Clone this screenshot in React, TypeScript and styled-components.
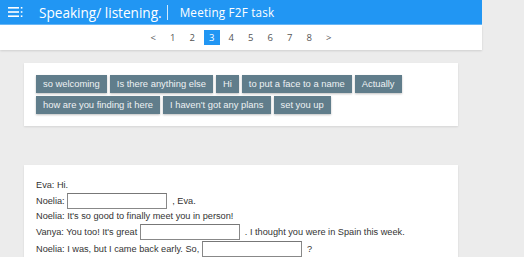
import React from 'react'
import styled, { createGlobalStyle } from 'styled-components'

const GlobalStyle = createGlobalStyle`
  html, body {
    margin: 0;
    padding: 0;
    background: #ececec;
    font-family: 'Liberation Sans', Arial, sans-serif;
  }
`

const Page = styled.div`
  width: 482px;
`

const TopBar = styled.header`
  display: flex;
  align-items: center;
  height: 24px;
  background: #2196f3;
  border-bottom: 1px solid #6ab8f7;
  color: #fff;
  padding-left: 8px;
`

const MenuIcon = styled.svg`
  width: 15px;
  height: 10px;
  margin-right: 16px;
`

const Title = styled.h1`
  margin: 0;
  font-family: 'Open Sans', sans-serif;
  font-weight: 400;
  font-size: 13.6px;
`

const Divider = styled.span`
  width: 1px;
  height: 15px;
  background: rgba(255, 255, 255, 0.8);
  margin: 0 12px 0 5px;
`

const Subtitle = styled.span`
  font-family: 'Open Sans', sans-serif;
  font-size: 11.7px;
  letter-spacing: 0.2px;
`

const Pager = styled.nav`
  display: flex;
  justify-content: center;
  align-items: center;
  gap: 4px;
  height: 25px;
  background: #fff;
  box-shadow: 0 1px 2px rgba(0, 0, 0, 0.12);
`

const PageItem = styled.span<{ $active?: boolean }>`
  width: 15.5px;
  height: 15px;
  display: flex;
  align-items: center;
  justify-content: center;
  font-family: 'Open Sans', sans-serif;
  font-size: 9.5px;
  color: ${({ $active }) => ($active ? '#fff' : '#555')};
  background: ${({ $active }) => ($active ? '#2196f3' : 'transparent')};
`

const Card = styled.section`
  width: 434px;
  margin: 0 auto;
  background: #fff;
  box-shadow: 0 1px 2px rgba(0, 0, 0, 0.1);
  box-sizing: border-box;
`

const WordBank = styled(Card)`
  margin-top: 13px;
  padding: 12px 12px 9px;
  display: flex;
  flex-wrap: wrap;
`

const Chip = styled.span`
  height: 18px;
  line-height: 18px;
  padding: 0 7px;
  margin: 0 3px 3px 0;
  background: #607d8b;
  color: #eef2f4;
  font-size: 9.4px;
  box-shadow: 0 1px 2px rgba(0, 0, 0, 0.25);
`

const Dialogue = styled(Card)`
  margin-top: 39px;
  padding: 13px 12px;
  font-size: 9.2px;
  color: #333;
`

const Line = styled.div<{ $tall?: boolean }>`
  display: flex;
  align-items: center;
  height: ${({ $tall }) => ($tall ? '17px' : '14px')};
  white-space: pre;
`

const Blank = styled.span`
  display: inline-block;
  width: 100px;
  height: 16px;
  box-sizing: border-box;
  border: 1px solid #888;
  border-top-color: #777;
`

const Indent = styled.span`
  width: 206px;
`

const words = [
  'so welcoming',
  'Is there anything else',
  'Hi',
  'to put a face to a name',
  'Actually',
  "how are you finding it here",
  "I haven't got any plans",
  'set you up',
]

const App: React.FC = () => {
  return (
    <>
      <GlobalStyle />
      <Page>
        <TopBar>
          <MenuIcon viewBox="0 0 15 10">
            <rect x="0" y="0" width="11" height="1.6" fill="#fff" />
            <rect x="0" y="4.2" width="11" height="1.6" fill="#fff" />
            <rect x="0" y="8.4" width="11" height="1.6" fill="#fff" />
            <rect x="12.8" y="0" width="1.6" height="1.6" fill="#fff" />
            <rect x="12.8" y="4.2" width="1.6" height="1.6" fill="#fff" />
            <rect x="12.8" y="8.4" width="1.6" height="1.6" fill="#fff" />
          </MenuIcon>
          <Title>Speaking/ listening.</Title>
          <Divider />
          <Subtitle>Meeting F2F task</Subtitle>
        </TopBar>
        <Pager>
          <PageItem>&lt;</PageItem>
          {[1, 2, 3, 4, 5, 6, 7, 8].map((n) => (
            <PageItem key={n} $active={n === 3}>
              {n}
            </PageItem>
          ))}
          <PageItem>&gt;</PageItem>
        </Pager>
        <WordBank>
          {words.map((w) => (
            <Chip key={w}>{w}</Chip>
          ))}
        </WordBank>
        <Dialogue>
          <Line>Eva: Hi.</Line>
          <Line $tall>
            Noelia: <Blank />  , Eva.
          </Line>
          <Line>Noelia: It's so good to finally meet you in person!</Line>
          <Line $tall>
            Vanya: You too! It's great <Blank />  . I thought you were in Spain this week.
          </Line>
          <Line $tall>
            Noelia: I was, but I came back early. So, <Blank />  ?
          </Line>
          <Line $tall>
            <Indent />
            <Blank />
          </Line>
        </Dialogue>
      </Page>
    </>
  )
}

export default App
